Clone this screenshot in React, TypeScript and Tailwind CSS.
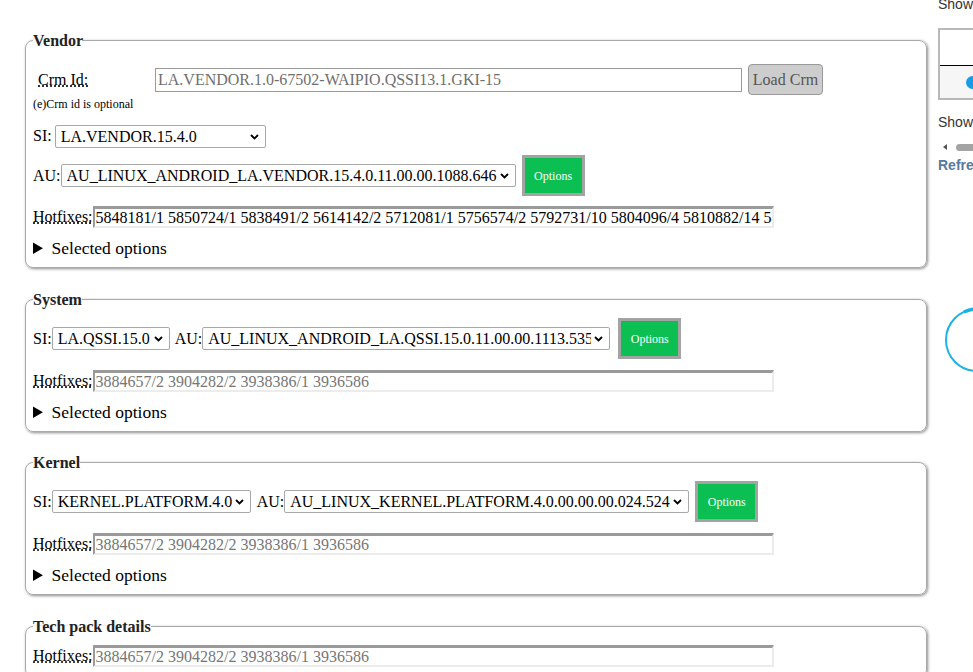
import React from "react";

const serif = "font-['Liberation_Serif',serif]";

function Select({ value, className }: { value: string; className: string }) {
  return (
    <div className={`relative h-[23px] shrink-0 ${className}`}>
      <select
        defaultValue={value}
        className={`h-full w-full appearance-none rounded-[2px] border border-[#a8a8a8] bg-white pl-[5px] pr-[18px] text-[16px] leading-[21px] text-black ${serif}`}
      >
        <option>{value}</option>
      </select>
      <svg
        className="pointer-events-none absolute right-[7px] top-[9px]"
        width="9"
        height="6"
        viewBox="0 0 9 6"
      >
        <path d="M1 1l3.5 3.5L8 1" stroke="#000" strokeWidth="1.8" fill="none" />
      </svg>
    </div>
  );
}

function OptionsButton({ className = "" }: { className?: string }) {
  return (
    <button
      className={`h-[41px] w-[63px] shrink-0 border-[3px] border-[#a3a3a3] bg-[#0bbf53] text-[12px] text-white ${serif} ${className}`}
    >
      Options
    </button>
  );
}

function Hotfixes({ value, placeholder }: { value?: string; placeholder?: string }) {
  return (
    <div className="flex items-center">
      <abbr title="Hotfixes" className="text-[16px] leading-[18px]">
        Hotfixes:
      </abbr>
      <input
        readOnly
        defaultValue={value}
        placeholder={placeholder}
        className={`h-[22px] w-[681px] border-t-[3px] border-r-[2px] border-b-[2px] border-l-[2px] border-t-[#9a9a9a] border-r-[#ececec] border-b-[#ececec] border-l-[#9a9a9a] bg-white pl-[1px] text-[16px] leading-[17px] text-black placeholder:text-[#767676] ${serif}`}
      />
    </div>
  );
}

function Selected() {
  return (
    <details className="mt-[11px]">
      <summary className={`cursor-pointer text-[17.5px] leading-[18px] ${serif}`}>
        Selected options
      </summary>
    </details>
  );
}

const fieldsetCls =
  "rounded-[8px] border border-[#a9a9a9] px-[7px] pb-[10px] shadow-[1px_1px_3px_rgba(0,0,0,0.45)]";
const legendCls = "text-[16px] font-bold leading-[17px] text-[#222]";

const otherFixes = "3884657/2 3904282/2 3938386/1 3936586";

export default function App() {
  return (
    <div className={`flex h-[672px] w-[973px] overflow-hidden bg-white text-black ${serif}`}>
      <main className="ml-[25px] w-[902px] shrink-0 pt-[32px]">
        <fieldset className={fieldsetCls}>
          <legend className={legendCls}>Vendor</legend>

          <div className="mt-[15px] flex h-[31px] items-center">
            <div className="w-[122px] shrink-0 pl-[5px]">
              <abbr title="Crm Id" className="text-[16px] leading-[18px]">
                Crm Id:
              </abbr>
            </div>
            <input
              readOnly
              placeholder="LA.VENDOR.1.0-67502-WAIPIO.QSSI13.1.GKI-15"
              className={`h-[24px] w-[587px] border border-[#9a9a9a] bg-white pl-[2px] text-[16px] placeholder:text-[#6f6f6f] ${serif}`}
            />
            <button
              className={`ml-[6px] h-[31px] w-[75px] rounded-[4px] border border-[#9a9a9a] bg-[#cdcdcd] text-[16px] text-[#555] ${serif}`}
            >
              Load Crm
            </button>
          </div>
          <p className="mt-[3px] text-[12px] leading-[13px]">(e)Crm id is optional</p>

          <div className="mt-[13px] flex items-center text-[16px]">
            <span>SI:</span>
            <Select value="LA.VENDOR.15.4.0" className="ml-[3px] w-[211px]" />
          </div>

          <div className="mt-[7px] flex items-center text-[16px]">
            <span>AU:</span>
            <Select value="AU_LINUX_ANDROID_LA.VENDOR.15.4.0.11.00.00.1088.646" className="w-[455px]" />
            <OptionsButton className="ml-[6px]" />
          </div>

          <div className="mt-[10px]">
            <Hotfixes value="5848181/1 5850724/1 5838491/2 5614142/2 5712081/1 5756574/2 5792731/10 5804096/4 5810882/14 5816623/3 5820014/1" />
          </div>
          <Selected />
        </fieldset>

        <fieldset className={`mt-[23px] ${fieldsetCls}`}>
          <legend className={legendCls}>System</legend>
          <div className="mt-[10px] flex items-center text-[16px]">
            <span>SI:</span>
            <Select value="LA.QSSI.15.0" className="w-[118px]" />
            <span className="ml-[5px]">AU:</span>
            <Select value="AU_LINUX_ANDROID_LA.QSSI.15.0.11.00.00.1113.535" className="w-[408px]" />
            <OptionsButton className="ml-[8px]" />
          </div>
          <div className="mt-[11px]">
            <Hotfixes placeholder={otherFixes} />
          </div>
          <Selected />
        </fieldset>

        <fieldset className={`mt-[22px] ${fieldsetCls}`}>
          <legend className={legendCls}>Kernel</legend>
          <div className="mt-[10px] flex items-center text-[16px]">
            <span>SI:</span>
            <Select value="KERNEL.PLATFORM.4.0" className="w-[199px]" />
            <span className="ml-[6px]">AU:</span>
            <Select value="AU_LINUX_KERNEL.PLATFORM.4.0.00.00.00.024.524" className="w-[405px]" />
            <OptionsButton className="ml-[6px]" />
          </div>
          <div className="mt-[11px]">
            <Hotfixes placeholder={otherFixes} />
          </div>
          <Selected />
        </fieldset>

        <fieldset className={`mt-[23px] ${fieldsetCls}`}>
          <legend className={legendCls}>Tech pack details</legend>
          <div className="mt-[10px]">
            <Hotfixes placeholder={otherFixes} />
          </div>
        </fieldset>
      </main>

      <aside className="ml-[11px] w-[220px] shrink-0 font-['Liberation_Sans',sans-serif] text-[14px] text-[#333]">
        <div className="-mt-[4px] leading-[16px]">Show entries</div>
        <div className="mt-[16px] h-[72px] w-[200px] border-2 border-[#b8b8b8]">
          <div className="h-[36px] border-b border-black bg-white" />
          <div className="flex h-[32px] items-center bg-[#f6f6f6] pl-[26px]">
            <span className="h-[13px] w-[13px] rounded-full bg-[#1a9be6]" />
          </div>
        </div>
        <div className="mt-[14px] leading-[16px]">Show history</div>
        <div className="mt-[13px] flex h-[8px] items-center">
          <svg width="8" height="8" viewBox="0 0 8 8" className="ml-[3px]">
            <path d="M6 1L2 4l4 3z" fill="#555" />
          </svg>
          <span className="ml-[7px] h-[7px] w-[120px] rounded-full bg-[#a3a3a3]" />
        </div>
        <div className="mt-[6px] font-bold leading-[16px] text-[#587a9c]">Refresh</div>
        <svg width="80" height="70" viewBox="0 0 80 70" className="ml-[6px] mt-[132px]">
          <circle cx="33" cy="35" r="31" stroke="#1db1e8" strokeWidth="2" fill="none" />
          <path d="M20 7 A31 31 0 0 1 46 7" stroke="#1db1e8" strokeWidth="3.5" fill="none" />
        </svg>
      </aside>
    </div>
  );
}
